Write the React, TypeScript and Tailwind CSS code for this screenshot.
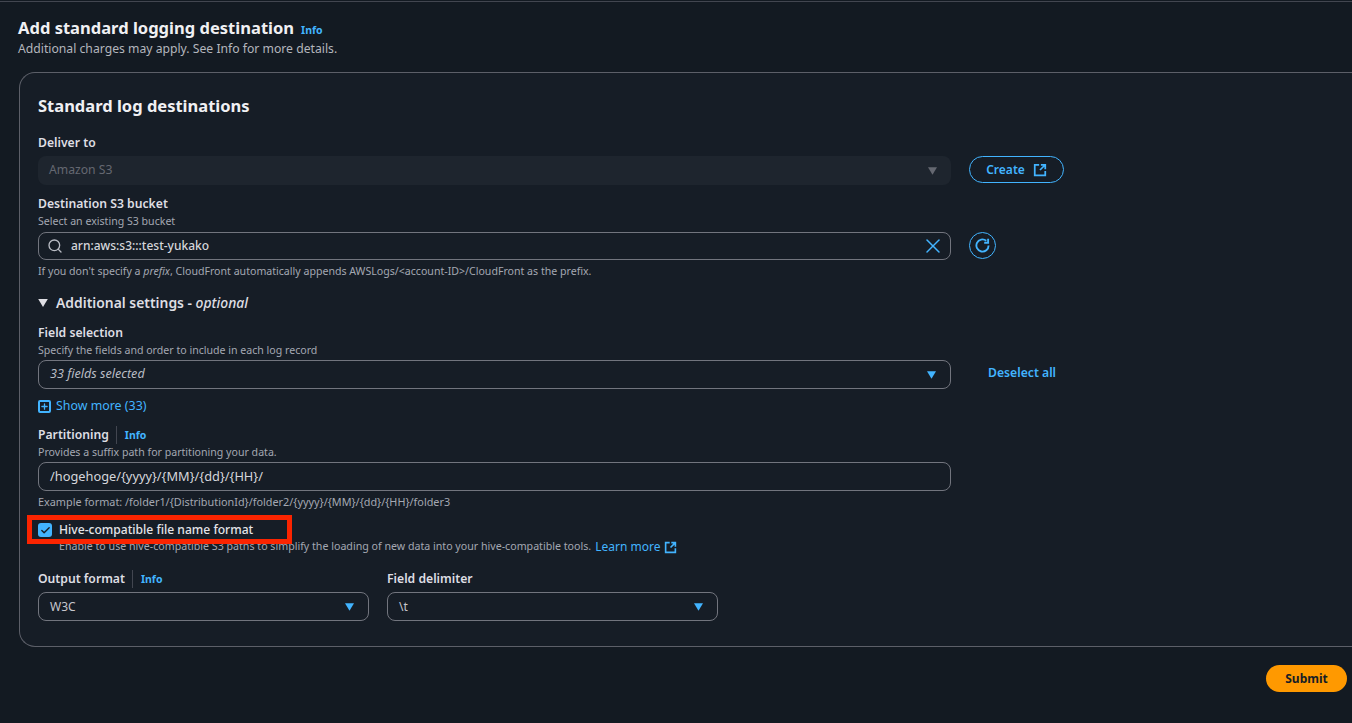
import { Check, Plus, Search, X } from "lucide-react";

const font = { fontFamily: '"Noto Sans", "Open Sans", sans-serif' };

function ExternalIcon({ className }: { className: string }) {
  return (
    <svg viewBox="0 0 16 16" fill="none" stroke="currentColor" strokeWidth="2" className={className}>
      <path d="M7 2H2v12h12V9" />
      <path d="M9 2h5v5M14 2 8 8" />
    </svg>
  );
}

function Caret({ className }: { className: string }) {
  return (
    <svg viewBox="0 0 12 10" fill="currentColor" className={className}>
      <path d="M0 0h12L6 10z" />
    </svg>
  );
}

function Info() {
  return <span className="text-[10.5px] leading-4 font-bold text-[#42b4ff]">Info</span>;
}

function Label({ children, info }: { children: string; info?: boolean }) {
  return (
    <div className="flex items-center h-[18px] text-[12.2px] font-semibold text-[#dedee3]">
      <span>{children}</span>
      {info && (
        <>
          <span className="w-px h-[18px] bg-[#424650] ml-[7px] mr-[8px]" />
          <Info />
        </>
      )}
    </div>
  );
}

function Hint({ children }: { children: React.ReactNode }) {
  return <div className="h-[16px] leading-4 text-[10.6px] text-[#a4a8b2]">{children}</div>;
}

function Select({ value, italic, className }: { value: string; italic?: boolean; className: string }) {
  return (
    <div className={`flex items-center justify-between h-[29px] pl-[11px] pr-[14px] border border-[#72757e] rounded-lg ${italic ? "text-[12.6px] italic text-[#b9bcc4]" : "text-[12px] text-[#c6c6cd]"} ${className}`}>
      <span>{value}</span>
      <Caret className="w-[9px] h-[8px] text-[#42b4ff]" />
    </div>
  );
}

export default function App() {
  return (
    <div style={font} className="w-[1352px] h-[723px] overflow-hidden bg-[#131a22] text-white">
      <div className="mt-px h-px bg-[#424650]" />

      {/* Header */}
      <div className="pl-[18px] pt-[15px] h-[70px]">
        <div className="flex items-center gap-[7px] h-[22px]">
          <h1 className="text-[16.55px] font-bold text-[#f0f0f3]">Add standard logging destination</h1>
          <span><Info /></span>
        </div>
        <p className="text-[12.2px] leading-5 text-[#b3b6bd]">Additional charges may apply. See Info for more details.</p>
      </div>

      {/* Container */}
      <div className="pl-[19px]">
        <div className="h-[575px] pl-[18px] border border-r-0 border-[#5c5f68] rounded-l-2xl bg-[#161d26]">
          <h2 className="mt-[21px] h-[24px] leading-6 text-[16.5px] font-bold text-[#f0f0f3]">Standard log destinations</h2>

          <div className="mt-[16px]"><Label>Deliver to</Label></div>
          <div className="mt-[4px] flex items-start">
            <div className="flex items-center justify-between w-[913px] h-[29px] pl-[11px] pr-[14px] rounded-lg bg-[#1e252e] text-[12.2px] text-[#656871]">
              <span>Amazon S3</span>
              <Caret className="w-[9px] h-[8px] text-[#656871]" />
            </div>
            <button className="ml-[18px] flex items-center justify-center gap-2 w-[95px] h-[27px] border border-[#42b4ff] rounded-full text-[12px] font-semibold text-[#42b4ff]">
              Create <ExternalIcon className="w-[14px] h-[14px]" />
            </button>
          </div>

          <div className="mt-[10px]"><Label>Destination S3 bucket</Label></div>
          <Hint>Select an existing S3 bucket</Hint>
          <div className="mt-[3px] flex items-start">
            <div className="flex items-center justify-between w-[913px] h-[28px] pl-[8px] pr-[5px] border border-[#72757e] rounded-lg">
              <div className="flex items-center gap-[8px] text-[12px] font-medium text-[#d5d6db]">
                <Search className="w-4 h-4 text-[#b9bcc4]" strokeWidth={2} />
                <span>arn:aws:s3:::test-yukako</span>
              </div>
              <X className="w-[24px] h-[24px] text-[#42b4ff]" strokeWidth={1.5} />
            </div>
            <button className="ml-[18px] flex items-center justify-center w-[27px] h-[27px] border border-[#42b4ff] rounded-full text-[#42b4ff]">
              <svg viewBox="0 0 16 16" fill="none" stroke="currentColor" strokeWidth="2" className="w-[15px] h-[15px]">
                <path d="M14.5 8A6.5 6.5 0 1 1 12 2.9" />
                <path d="M14 .8V5H9.8" />
              </svg>
            </button>
          </div>
          <div className="mt-[3px]">
            <Hint>If you don't specify a <i>prefix</i>, CloudFront automatically appends AWSLogs/&lt;account-ID&gt;/CloudFront as the prefix.</Hint>
          </div>

          <div className="mt-[14px] flex items-center gap-[8px] h-[20px] text-[13.9px] font-semibold text-[#dedee3]">
            <Caret className="w-[10px] h-[8px] text-[#dedee3]" />
            <span>Additional settings - <i className="font-medium">optional</i></span>
          </div>

          <div className="mt-[11px]"><Label>Field selection</Label></div>
          <Hint>Specify the fields and order to include in each log record</Hint>
          <div className="mt-[2px] flex items-center">
            <Select value="33 fields selected" italic className="w-[913px] h-[28px]" />
            <a className="ml-[37px] mb-[2px] text-[12.2px] font-semibold text-[#42b4ff]">Deselect all</a>
          </div>

          <div className="mt-[9px] flex items-center gap-[5px] h-[16px] text-[12.4px] text-[#42b4ff]">
            <span className="flex items-center justify-center w-[13px] h-[13px] border-2 border-[#42b4ff] rounded-[2px]">
              <Plus className="w-[9px] h-[9px]" strokeWidth={3.5} />
            </span>
            <span>Show more (33)</span>
          </div>

          <div className="mt-[12px]"><Label info>Partitioning</Label></div>
          <Hint>Provides a suffix path for partitioning your data.</Hint>
          <div className="mt-[2px] flex items-center w-[913px] h-[29px] pl-[11px] border border-[#72757e] rounded-lg text-[12.8px] text-[#d5d6db]">
            /hogehoge/&#123;yyyy&#125;/&#123;MM&#125;/&#123;dd&#125;/&#123;HH&#125;/
          </div>
          <div className="mt-[3px] text-[10.85px]">
            <div className="h-[16px] leading-4 text-[#a4a8b2]">Example format: /folder1/&#123;DistributionId&#125;/folder2/&#123;yyyy&#125;/&#123;MM&#125;/&#123;dd&#125;/&#123;HH&#125;/folder3</div>
          </div>

          {/* Checkbox, annotated with a red frame */}
          <div className="relative mt-[12px] flex items-center gap-[7px] h-[16px]">
            <span className="flex items-center justify-center w-[14px] h-[14px] rounded-[3px] bg-[#42b4ff]">
              <Check className="w-[11px] h-[11px] text-[#161d26]" strokeWidth={3} />
            </span>
            <span className="text-[12.1px] font-medium text-[#e4e4e8]">Hive-compatible file name format</span>
            <div className="absolute left-[-11px] top-[-7px] w-[265px] h-[29px] border-[5px] border-[#fb2400]" />
          </div>
          <div className="mt-[1px] flex items-center gap-[4px] pl-[21px] h-[16px] text-[10.65px] text-[#a4a8b2]">
            <span>Enable to use hive-compatible S3 paths to simplify the loading of new data into your hive-compatible tools.</span>
            <span className="text-[12px] text-[#42b4ff]">Learn more</span>
            <ExternalIcon className="w-[13px] h-[13px] text-[#42b4ff]" />
          </div>

          <div className="mt-[15px] flex gap-[18px]">
            <div className="w-[331px]">
              <Label info>Output format</Label>
              <Select value="W3C" className="mt-[4px]" />
            </div>
            <div className="w-[331px]">
              <Label>Field delimiter</Label>
              <Select value="\t" className="mt-[4px]" />
            </div>
          </div>
        </div>
      </div>

      {/* Footer */}
      <div className="flex justify-end pr-[5px] pt-[18px]">
        <button className="w-[81px] h-[27px] rounded-full bg-[#ff9900] text-[12px] font-bold text-[#161d26]">Submit</button>
      </div>
    </div>
  );
}
